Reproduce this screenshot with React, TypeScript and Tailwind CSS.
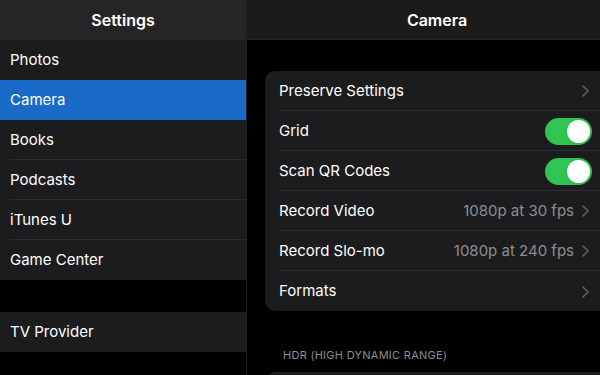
import { ReactNode } from 'react';

const sidebarItems = ['Photos', 'Camera', 'Books', 'Podcasts', 'iTunes U', 'Game Center'];

function Chevron() {
  return (
    <svg width="7" height="12" viewBox="0 0 7 12" className="shrink-0 mr-[3px]">
      <path d="M1 1l5 5-5 5" fill="none" stroke="#5e5e62" strokeWidth="1.6" strokeLinecap="round" strokeLinejoin="round" />
    </svg>
  );
}

function Toggle() {
  return (
    <div className="w-[47px] h-[27px] rounded-full bg-[#30c552] p-[2px] flex justify-end shrink-0">
      <div className="w-[23px] h-[23px] rounded-full bg-white shadow" />
    </div>
  );
}

function SideRow({ label, active, last }: { label: string; active?: boolean; last?: boolean }) {
  return (
    <div className={`h-10 shrink-0 pl-[10px] flex ${active ? 'bg-[#1a6ac7]' : ''}`}>
      <div
        className={`flex-1 flex items-center pt-[1px] text-[15px] text-white ${
          last || active ? '' : 'border-b border-[#2c2c2e]'
        }`}
      >
        {label}
      </div>
    </div>
  );
}

function CardRow({ label, right, last }: { label: string; right: ReactNode; last?: boolean }) {
  return (
    <div className="h-10 shrink-0 pl-[14px] flex">
      <div
        className={`flex-1 flex items-center justify-between pr-[17px] pt-[1px] ${
          last ? '' : 'border-b border-[#2e2e30]'
        }`}
      >
        <span className="text-[15px] text-white">{label}</span>
        {right}
      </div>
    </div>
  );
}

function Value({ text }: { text?: string }) {
  return (
    <div className="flex items-center gap-[8px]">
      {text && <span className="text-[15px] text-[#8d8d92]">{text}</span>}
      <Chevron />
    </div>
  );
}

export default function App() {
  return (
    <div className="w-[600px] h-[375px] overflow-hidden bg-black flex items-start font-['Inter',sans-serif] antialiased">
      {/* sidebar */}
      <div className="w-[247px] h-[375px] shrink-0 flex flex-col border-r border-[#1f1f21]">
        <div className="h-10 shrink-0 bg-[#252527] flex items-center justify-center text-white text-[16px] font-semibold">
          Settings
        </div>
        <div className="bg-[#1c1c1e] shrink-0">
          {sidebarItems.map((item, i) => (
            <SideRow
              key={item}
              label={item}
              active={item === 'Camera'}
              last={i === sidebarItems.length - 1 || sidebarItems[i + 1] === 'Camera'}
            />
          ))}
        </div>
        <div className="h-8 shrink-0" />
        <div className="bg-[#1c1c1e] shrink-0">
          <SideRow label="TV Provider" last />
        </div>
      </div>

      {/* detail pane */}
      <div className="w-[380px] shrink-0 flex flex-col">
        <div className="h-10 shrink-0 bg-[#1b1b1c] border-b border-[#232325] flex items-center justify-center text-white text-[16px] font-semibold">
          Camera
        </div>
        <div className="px-[18px] pt-[31px]">
          <div className="rounded-[10px] bg-[#1c1c1e] overflow-hidden">
            <CardRow label="Preserve Settings" right={<Value />} />
            <CardRow label="Grid" right={<Toggle />} />
            <CardRow label="Scan QR Codes" right={<Toggle />} />
            <CardRow label="Record Video" right={<Value text="1080p at 30 fps" />} />
            <CardRow label="Record Slo-mo" right={<Value text="1080p at 240 fps" />} />
            <CardRow label="Formats" right={<Value />} last />
          </div>
          <div className="mt-[36px] pl-[18px] text-[11px] text-[#8d8d92] tracking-wide">HDR (HIGH DYNAMIC RANGE)</div>
          <div className="mt-[8px] h-10 rounded-[10px] bg-[#1c1c1e]" />
        </div>
      </div>
    </div>
  );
}
